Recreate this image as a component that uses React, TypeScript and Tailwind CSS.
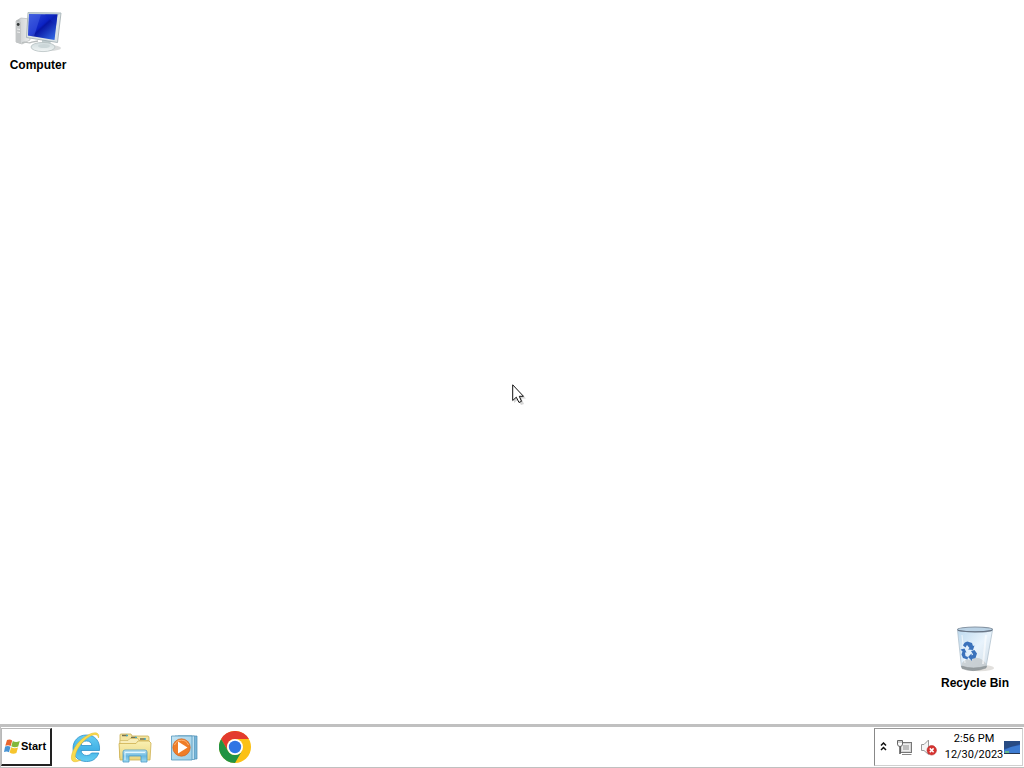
import React from "react";

function ComputerIcon() {
  return (
    <svg width="48" height="44" viewBox="0 0 48 44" aria-hidden="true">
      <defs>
        <linearGradient id="screen" x1="0" y1="0" x2="1" y2="1">
          <stop offset="0" stopColor="#3452d8" />
          <stop offset="0.45" stopColor="#0b22c4" />
          <stop offset="0.5" stopColor="#0716a4" />
          <stop offset="1" stopColor="#3a78ee" />
        </linearGradient>
        <linearGradient id="tower" x1="0" y1="0" x2="1" y2="0">
          <stop offset="0" stopColor="#8f9496" />
          <stop offset="0.35" stopColor="#d4d7d8" />
          <stop offset="1" stopColor="#eceeee" />
        </linearGradient>
        <linearGradient id="stand" x1="0" y1="0" x2="0" y2="1">
          <stop offset="0" stopColor="#d0dbdd" />
          <stop offset="1" stopColor="#f1f5f5" />
        </linearGradient>
      </defs>
      <ellipse cx="36" cy="39" rx="11" ry="3" fill="#d9dbdb" />
      <path d="M2 12 L7 9 L16 10 V31 L8 35 L2 33 Z" fill="url(#tower)" stroke="#b7baba" strokeWidth="0.7" />
      <path d="M2 12 L7 13 V35 L2 33 Z" fill="#c3c6c7" />
      <circle cx="4.2" cy="15.5" r="1.4" fill="#303535" />
      <path d="M3 20 L6 20.5 M3 23 L6 23.5" stroke="#eee" strokeWidth="1" />
      <path d="M8 34 C12 31 14 36 18 33 L24 32" stroke="#b9bdbd" strokeWidth="1.3" fill="none" />
      <path d="M28 29 L37 31 L36 38 L28 37 Z" fill="#c1cdcf" />
      <ellipse cx="29" cy="38" rx="12" ry="4.6" fill="url(#stand)" stroke="#b6c0c1" strokeWidth="0.8" />
      <ellipse cx="30" cy="37" rx="6" ry="2" fill="#cbd6d8" />
      <path d="M14 3.5 L47 4 L43.5 33.5 L12.5 28.5 Z" fill="#dce4e6" stroke="#9eabaf" strokeWidth="0.8" />
      <path d="M14 3.5 L47 4 L44.5 6 L15.5 5.5 Z" fill="#bccbd2" />
      <path d="M15 5 L43.5 5.5 L40.5 31 L14 26.5 Z" fill="url(#screen)" />
      <path d="M15 5 L27 5.2 L20 27.5 L14 26.5 Z" fill="#5c7bf0" opacity="0.35" />
      <path d="M31 5.3 H43.5 L42 17 Z" fill="#102cc0" opacity="0.5" />
    </svg>
  );
}

function RecycleIcon() {
  return (
    <svg width="42" height="48" viewBox="0 0 42 48" aria-hidden="true">
      <defs>
        <linearGradient id="glass" x1="0" y1="0" x2="1" y2="1">
          <stop offset="0" stopColor="#bddaef" />
          <stop offset="0.5" stopColor="#e8f3fc" />
          <stop offset="1" stopColor="#cfdbe4" />
        </linearGradient>
      </defs>
      <ellipse cx="26" cy="44" rx="14" ry="3.200" fill="#e2e0dd" />
      <path d="M3.500 6 L7.500 43 Q19 48 32 43 L38.500 6 Z" fill="url(#glass)" stroke="#b1c2ce" strokeWidth="0.8" />
      <path d="M8 39 C12 33 16 37 20 34 C26 33 30 37 32.500 40 L31.500 43 Q19 48 8 43 Z" fill="#c2c7ca" opacity="0.75" />
      <path d="M7.500 42 Q19 46 32.500 42 L32 44 Q19 49 8 44.500 Z" fill="#969da0" stroke="#848a8c" strokeWidth="0.5" />
      <ellipse cx="21" cy="5.500" rx="17.500" ry="2.500" fill="#bad2e5" stroke="#8594a3" strokeWidth="1.200" />
      <path d="M4 6.500 Q21 9 38 6.500" stroke="#667384" strokeWidth="1.200" fill="none" />
      <path d="M32 11 L29 40" stroke="#fff" strokeWidth="2" opacity="0.6" />
      <path d="M8 11 L11 39" stroke="#fff" strokeWidth="1.200" opacity="0.6" />
      <path d="M8 22 L16 17 L22 29 L18 36 L9 34 Z" fill="#e3f0fb" />
      <g fill="#3b72bb">
        <path d="M9 21.500 Q10 18 13.500 17.500 L18 19 L19 22 L20.500 21.500 L19 26 L14 25.500 L15.500 24 L13 21 L11.500 23.500 Z" />
        <path d="M6.500 25.500 L10.500 24.500 L12.500 28.500 L11 28.500 L11.500 32 L14 33 L13.500 35.500 L9 34 L7.500 30.500 L8.500 27.500 Z" />
        <path d="M17 27 L20.500 26 L23 29.500 L21.500 34 L18 35 L18 37 L14 33 L17.500 29.500 L17.700 31.500 L19.200 30.500 Z" />
      </g>
    </svg>
  );
}

function WindowsIcon() {
  return (
    <svg width="16" height="16" viewBox="0 0 16 16" className="shrink-0" aria-hidden="true">
      <path d="M3 1 C5 0 6.700 .4 8.200 1.500 L6.700 7 C5 6 3.300 6 1.300 6.800 Z" fill="#e8662f" />
      <path d="M8.800 2 C11 3.200 13 3.200 15.800 2 L14.200 7.600 C11.800 8.700 9.500 8.600 7.300 7.300 Z" fill="#82b83b" />
      <path d="M1.100 7.500 C3 6.700 4.800 6.700 6.500 7.700 L5 13.200 C3.500 12.200 1.800 12.200 0 13 Z" fill="#4894d4" />
      <path d="M7.100 8.200 C9.500 9.400 11.500 9.400 14 8.400 L12.400 14 C10 15.200 7.800 14.800 5.600 13.500 Z" fill="#f6c52e" />
    </svg>
  );
}

function ExplorerIcon() {
  return (
    <svg width="32" height="32" viewBox="0 0 32 32" aria-hidden="true">
      <defs>
        <linearGradient id="ie" x1="0" y1="0" x2="0" y2="1">
          <stop offset="0" stopColor="#67cdf2" />
          <stop offset="0.55" stopColor="#43b2e6" />
          <stop offset="1" stopColor="#67cff2" />
        </linearGradient>
      </defs>
      <path fillRule="evenodd" d="M30.500 19.500 H12 C12.500 22.500 14.500 24.500 17.500 24.500 C20 24.500 21.500 23.500 22.500 22 H29.800 C27.500 28 23.300 30.500 17.500 30.500 C9.500 30.500 4 25.500 4 17.500 C4 9.500 9.500 4 17.500 4 C26 4 31.300 10 30.500 19.500 Z M12.100 14.500 H22.900 C22.500 11.500 20.500 10 17.500 10 C14.500 10 12.500 11.500 12.100 14.500 Z" fill="url(#ie)" stroke="#2c91c9" strokeWidth="0.8" />
      <path d="M29.500 7 C31 1.500 26 .2 19 4 C10 8.500 3.500 18 2.500 25 C1.500 31.500 6 32 12 29 C7.500 30 5.500 28 6.500 23.500 C8 17 14 9.500 20.500 5.500 C26 2.500 29 3.200 29.500 7 Z" fill="#f9dc4e" stroke="#e4b72c" strokeWidth="0.5" />
    </svg>
  );
}

function FolderIcon() {
  return (
    <svg width="34" height="32" viewBox="0 0 34 32" aria-hidden="true">
      <defs>
        <linearGradient id="folder" x1="0" y1="0" x2="0" y2="1">
          <stop offset="0" stopColor="#faf0b2" />
          <stop offset="1" stopColor="#e9d57f" />
        </linearGradient>
        <linearGradient id="tray" x1="0" y1="0" x2="0" y2="1">
          <stop offset="0" stopColor="#c9ebf9" />
          <stop offset="0.5" stopColor="#69b8df" />
          <stop offset="1" stopColor="#9ddaf2" />
        </linearGradient>
      </defs>
      <path d="M2 27 V4 Q2 3 3 3 H13 L14 5 H30 Q31 5 31 7 V27 Z" fill="#f4e5a0" stroke="#c9ae54" strokeWidth="0.8" />
      <path d="M4 4.500 H9 M13 6.500 H18 M22 8 H27" stroke="#777250" strokeWidth="1.300" />
      <path d="M8 4.500 H10 M17 6.500 H19 M26 8 H28" stroke="#46a8bc" strokeWidth="1.300" />
      <path d="M2 9.500 H10 L12 7.500 H20 L21 9.500 H30 V27 H2 Z" fill="#f8edb8" stroke="#d0b760" strokeWidth="0.7" />
      <path d="M1 12.500 H18 L20 10 H31 L33 12 L32 29 H2 Z" fill="url(#folder)" stroke="#ceb050" strokeWidth="0.8" />
      <path d="M5 31 V21 Q5 19 7 19 H27 Q29 19 29 21 V31 H23 V25 H11 V31 Z" fill="url(#tray)" stroke="#4c9bc3" strokeWidth="0.8" />
      <path d="M7 29 V21.500 H27" stroke="#e3f7ff" fill="none" />
    </svg>
  );
}

function MediaIcon() {
  return (
    <svg width="30" height="28" viewBox="0 0 30 28" aria-hidden="true">
      <defs>
        <linearGradient id="media" x1="0" y1="0" x2="1" y2="1">
          <stop offset="0" stopColor="#c3e4f4" />
          <stop offset="1" stopColor="#9ccee6" />
        </linearGradient>
      </defs>
      <path d="M8 3 H27 V26 H8 Z" fill="#78b6d9" stroke="#4c8db3" strokeWidth="0.7" />
      <path d="M5 3 H24.500 V26.500 H5 Z" fill="#bde0f1" stroke="#5497bd" strokeWidth="0.7" />
      <path d="M1.500 3 H22 V27 H1.500 Z" fill="url(#media)" stroke="#5497bd" strokeWidth="0.8" />
      <circle cx="11.500" cy="14.500" r="8.700" fill="#ef7d28" stroke="#cf6420" strokeWidth="0.7" />
      <path d="M4.500 12 A7.500 7.500 0 0 1 18.500 12" stroke="#ffb875" strokeWidth="1" fill="none" />
      <path d="M8 8.500 L17.500 14.500 L8 20.500 Z" fill="#fff" />
    </svg>
  );
}

function ChromeIcon() {
  return (
    <svg width="32" height="32" viewBox="0 0 48 48" aria-hidden="true">
      <circle cx="24" cy="24" r="24" fill="#fbc116" />
      <path d="M3.200 12 A24 24 0 0 1 44.800 12 H24 A12 12 0 0 0 13.600 30 Z" fill="#e33b2e" />
      <path d="M3.200 12 L13.600 30 A12 12 0 0 0 34.400 30 L24 48 A24 24 0 0 1 3.200 12 Z" fill="#229342" />
      <circle cx="24" cy="24" r="12" fill="#fff" />
      <circle cx="24" cy="24" r="9.300" fill="#2f76e4" />
    </svg>
  );
}

function ChevronsIcon() {
  return (
    <svg width="7" height="11" viewBox="0 0 7 11" aria-hidden="true">
      <path d="M1 3.500 L3.500 1 L6 3.500 M1 8 L3.500 5.500 L6 8" stroke="#111" strokeWidth="1.500" fill="none" />
    </svg>
  );
}

function NetworkIcon() {
  return (
    <svg width="17" height="17" viewBox="0 0 17 17" aria-hidden="true">
      <rect x="4.500" y="3.500" width="11" height="10" fill="#d5d5d5" stroke="#777" />
      <rect x="6.500" y="5.500" width="7" height="6" fill="#bdbdbd" stroke="#eee" />
      <path d="M6 15.500 H15.500" stroke="#888" />
      <path d="M1.500 1.500 H6.500 V5 Q6.500 7.500 4 7.500 Q1.500 7.500 1.500 5 Z" stroke="#666" fill="#fff" />
      <path d="M3 2 V4 M5 2 V4" stroke="#888" strokeWidth="0.8" />
      <path d="M4 7.500 V15" stroke="#555" strokeWidth="1.500" />
    </svg>
  );
}

function VolumeIcon() {
  return (
    <svg width="17" height="17" viewBox="0 0 17 17" aria-hidden="true">
      <path d="M1.500 5.500 H4 L8.500 1 V15.500 L4 11.500 H1.500 Z" fill="#f5f5f5" stroke="#999" />
      <circle cx="11.700" cy="11.300" r="4.700" fill="#d63330" stroke="#b72725" strokeWidth="0.6" />
      <path d="M9.800 9.400 L13.600 13.200 M13.600 9.400 L9.800 13.200" stroke="#fff" strokeWidth="1.500" />
    </svg>
  );
}

function DisplayIcon() {
  return (
    <svg width="16" height="14" viewBox="0 0 16 14" aria-hidden="true">
      <rect width="16" height="13" y="1" fill="#2a56a8" />
      <path d="M0 1 H16 V4 L0 9 Z" fill="#284b83" />
      <path d="M0 10 L7 7 L16 5 V13 H0 Z" fill="#3d7bd1" />
      <path d="M0 13.500 H16" stroke="#27364f" />
      <rect x="1" y="11" width="4" height="2" fill="#62ba8d" />
    </svg>
  );
}

const launchers = [
  { label: "Internet Explorer", icon: <ExplorerIcon /> },
  { label: "File Explorer", icon: <FolderIcon /> },
  { label: "Media Player", icon: <MediaIcon /> },
  { label: "Chrome", icon: <ChromeIcon /> },
];

export default function App() {
  return (
    <div className="flex h-screen flex-col overflow-hidden bg-white font-['Liberation_Sans',sans-serif] text-black">
      <main className="relative flex-1">
        <button className="absolute top-[9px] left-0 flex w-[76px] flex-col items-center text-xs leading-4 font-bold">
          <ComputerIcon />
          <span className="mt-1">Computer</span>
        </button>
        <button className="absolute right-2 bottom-[33px] flex w-[82px] flex-col items-center text-xs leading-4 font-bold">
          <RecycleIcon />
          <span className="mt-[3px] whitespace-nowrap">Recycle Bin</span>
        </button>
        <svg className="absolute top-1/2 left-1/2 mt-[22px]" width="15" height="22" viewBox="0 0 15 22" aria-hidden="true">
          <path d="M2 3 V19 L6 15.500 L9 21 L12 20 L9.500 14.500 H14 Z" fill="#999" opacity="0.4" />
          <path d="M.7 .8 V16.500 L4.300 13.200 L7 18.500 L9.500 17.300 L7.300 12.300 H11.500 Z" fill="#fff" stroke="#111" strokeWidth="1" />
        </svg>
      </main>
      <footer className="flex h-11 items-stretch justify-between border-t-3 border-b border-l border-[#c0c0c0] bg-white">
        <div className="flex items-center">
          <button className="flex h-[38px] w-[51px] items-center gap-px border-t border-r-2 border-b-2 border-l border-t-[#b8b8b8] border-r-[#222] border-b-[#222] border-l-[#b8b8b8] pl-[2px] text-[11px] font-bold">
            <WindowsIcon />
            Start
          </button>
          <nav aria-label="Quick launch" className="ml-2 flex">
            {launchers.map(({ label, icon }) => (
              <button key={label} aria-label={label} className="flex h-10 w-[50px] items-center justify-center">
                {icon}
              </button>
            ))}
          </nav>
        </div>
        <div className="my-px mr-px flex items-center border border-t-[#999] border-r-[#d0d0d0] border-b-[#d0d0d0] border-l-[#888]">
          <button aria-label="Show hidden icons" className="flex w-[17px] justify-center">
            <ChevronsIcon />
          </button>
          <button aria-label="Network" className="flex w-6 justify-center">
            <NetworkIcon />
          </button>
          <button aria-label="Volume muted" className="flex w-6 justify-center">
            <VolumeIcon />
          </button>
          <time dateTime="2023-12-30T14:56" className="ml-1 w-[60px] text-center font-['Roboto',sans-serif] text-[11px] leading-4 whitespace-nowrap">
            2:56 PM
            <br />
            12/30/2023
          </time>
          <button aria-label="Show desktop" className="mr-[2px] flex">
            <DisplayIcon />
          </button>
        </div>
      </footer>
    </div>
  );
}
